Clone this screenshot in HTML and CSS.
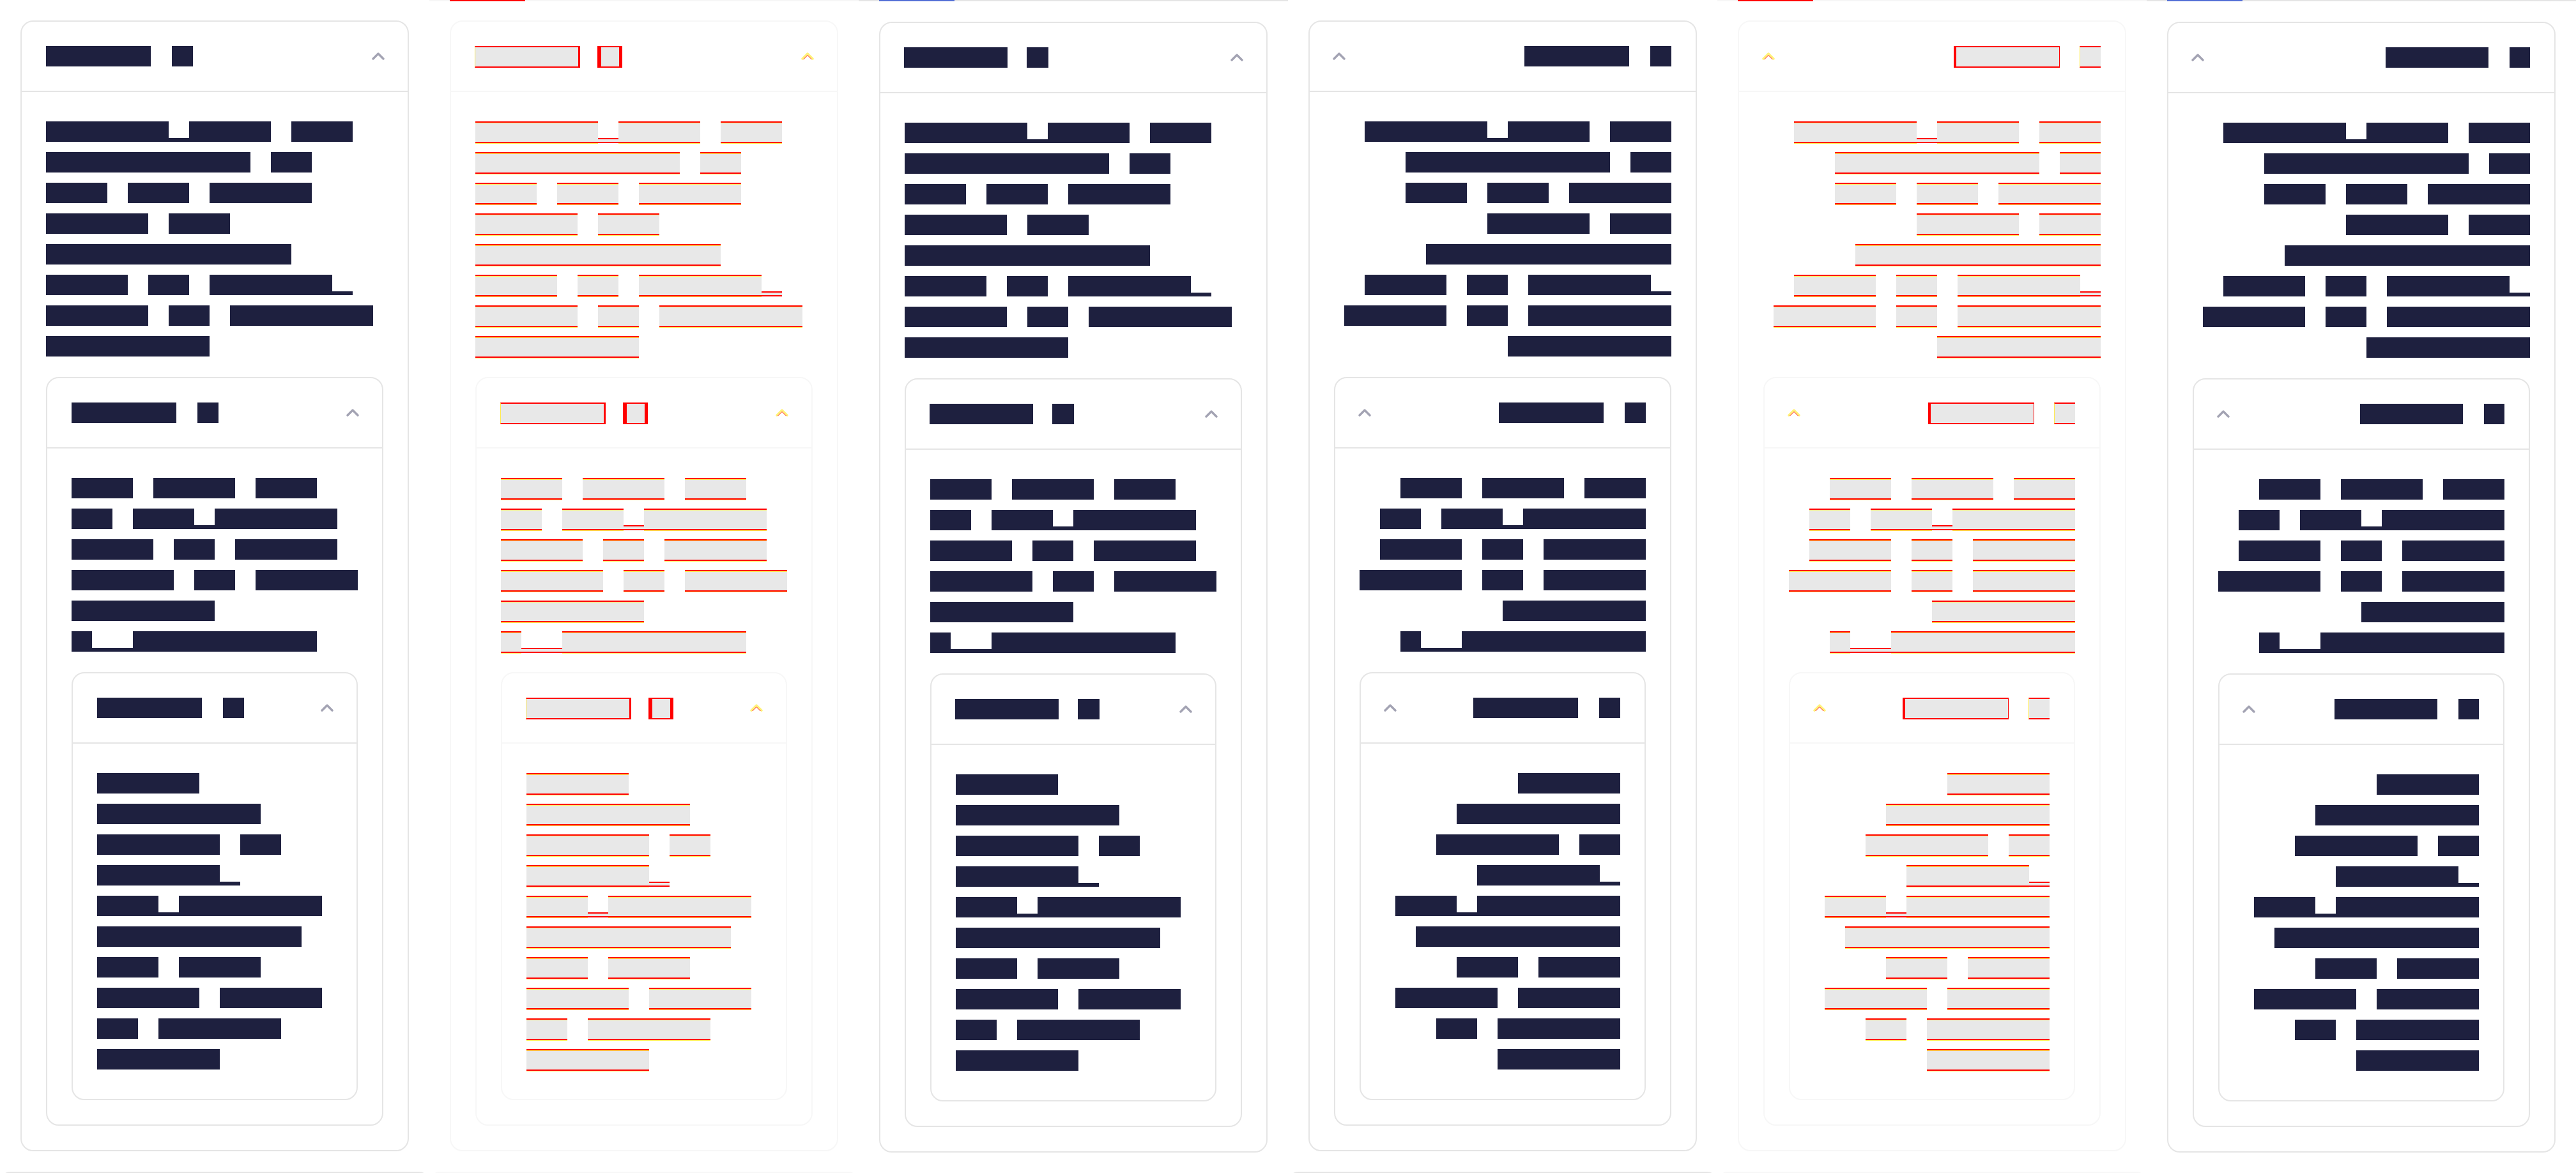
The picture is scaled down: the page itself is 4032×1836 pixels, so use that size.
FILE: index.html
```html
<!DOCTYPE html>
<html lang="en">
<head>
  <meta charset="UTF-8">
  <title>Accordion snapshot compare</title>
  <link rel="stylesheet" href="styles.css">
</head>
<body>

  <main class="board" id="board"></main>

  <script>
    // x = glyph, _ = low glyph, space = gap; one glyph is 32px wide
    const texts = [
      [
        "xxxxxx_xxxx xxx",
        "xxxxxxxxxx xx",
        "xxx xxx xxxxx",
        "xxxxx xxx",
        "xxxxxxxxxxxx",
        "xxxx xx xxxxxx_",
        "xxxxx xx xxxxxxx",
        "xxxxxxxx"
      ],
      [
        "xxx xxxx xxx",
        "xx xxx_xxxxxx",
        "xxxx xx xxxxx",
        "xxxxx xx xxxxx",
        "xxxxxxx",
        "x__xxxxxxxxx"
      ],
      [
        "xxxxx",
        "xxxxxxxx",
        "xxxxxx xx",
        "xxxxxx_",
        "xxx_xxxxxxx",
        "xxxxxxxxxx",
        "xxx xxxx",
        "xxxxx xxxxx",
        "xx xxxxxx",
        "xxxxxx"
      ]
    ];

    const columns = [
      { kind: "expected", dir: "ltr" },
      { kind: "diff", dir: "ltr" },
      { kind: "actual", dir: "ltr" },
      { kind: "expected", dir: "rtl" },
      { kind: "diff", dir: "rtl" },
      { kind: "actual", dir: "rtl" }
    ];

    const GLYPH = 32;

    function el(tag, cls) {
      const node = document.createElement(tag);
      if (cls) node.className = cls;
      return node;
    }

    function chevron(kind) {
      const wrap = el("span", "chevron");
      if (kind === "diff") {
        wrap.innerHTML =
          '<svg width="20" height="14" viewBox="0 0 20 14">' +
          '<path d="M2 11L10 3L18 11" fill="none" stroke="#fff27a" stroke-width="3.4" stroke-linecap="round" stroke-linejoin="round"/>' +
          '<path d="M3.5 12L10 5.5L16.5 12" fill="none" stroke="#ff2020" stroke-width="1"/>' +
          '</svg>';
      } else {
        wrap.innerHTML =
          '<svg width="20" height="14" viewBox="0 0 20 14">' +
          '<path d="M2 11L10 3L18 11" fill="none" stroke="#a3a3b3" stroke-width="3.4" stroke-linecap="round" stroke-linejoin="round"/>' +
          '</svg>';
      }
      return wrap;
    }

    function buildLine(text) {
      const line = el("div", "line");
      text.match(/x+|_+| +/g).forEach(run => {
        let cls = "gap";
        if (run[0] === "x") cls = "word";
        if (run[0] === "_") cls = "under";
        const span = el("span", cls);
        span.style.width = run.length * GLYPH + "px";
        line.appendChild(span);
      });
      return line;
    }

    function buildPanel(level, kind) {
      const panel = el("section", "panel");

      const head = el("div", "panel-head");
      const title = el("div", "panel-title");
      title.append(el("span", "title-word"), el("span", "title-count"));
      head.append(title, chevron(kind));

      const body = el("div", "panel-body");
      const para = el("div", "para");
      texts[level].forEach(t => para.appendChild(buildLine(t)));
      body.appendChild(para);
      if (level < texts.length - 1) body.appendChild(buildPanel(level + 1, kind));

      panel.append(head, body);
      return panel;
    }

    const board = document.getElementById("board");
    columns.forEach(c => {
      const col = el("div", "col col--" + c.kind + " col--" + c.dir);
      if (c.kind !== "expected") {
        const bar = el("div", "tabline");
        bar.appendChild(el("span", "tabline-mark"));
        col.appendChild(bar);
      }
      col.appendChild(buildPanel(0, c.kind));
      col.appendChild(el("div", "next-card"));
      board.appendChild(col);
    });
  </script>

</body>
</html>
```

FILE: styles.css
```css
html, body {
  margin: 0;
  background: #ffffff;
  font-family: "Liberation Sans", Arial, sans-serif;
}
.board {
  display: grid;
  grid-template-columns: repeat(6, 672px);
  height: 1836px;
  overflow: hidden;
}
.col {
  display: flex;
  flex-direction: column;
  padding: 32px 32px 0;
  overflow: hidden;
}
.col--diff,
.col--actual {
  padding-top: 0;
}
.tabline {
  display: flex;
  height: 2px;
  margin: 0 -32px 32px;
  padding-left: 32px;
  background: #e5e5e5;
  flex-shrink: 0;
}
.tabline-mark {
  width: 118px;
  background: #5470d6;
}
.col--diff .tabline {
  margin-bottom: 30px;
  background: #f6f6f6;
}
.col--diff .tabline-mark {
  background: #ff0000;
}

/* accordion panel */
.panel {
  border: 2px solid #e5e5e5;
  border-radius: 20px;
  background: #fff;
  flex-shrink: 0;
}
.panel-head {
  display: flex;
  align-items: center;
  justify-content: space-between;
  height: 108px;
  padding: 0 36px 0 38px;
  border-bottom: 2px solid #e5e5e5;
}
.panel-title {
  display: flex;
  align-items: flex-start;
  height: 32px;
}
.title-word,
.title-count {
  display: block;
  height: 32px;
  background: #1e203f;
}
.title-word {
  width: 164px;
}
.title-count {
  width: 33px;
  margin-left: 33px;
}
.chevron {
  display: flex;
  width: 20px;
  height: 14px;
}
.panel-body {
  display: flex;
  flex-direction: column;
  gap: 24px;
  padding: 38px;
}
.line {
  display: flex;
  align-items: flex-start;
  height: 48px;
  padding-top: 8px;
  box-sizing: border-box;
}
.line span {
  flex-shrink: 0;
}
.word {
  height: 32px;
  background: #1e203f;
}
.under {
  height: 6px;
  margin-top: 26px;
  background: #1e203f;
}
.next-card {
  flex-shrink: 0;
  height: 60px;
  margin: 32px -32px 0;
  border: 2px solid #e5e5e5;
  border-radius: 16px;
}

/* right-to-left columns */
.col--rtl .panel-head {
  flex-direction: row-reverse;
  padding: 0 38px 0 36px;
}
.col--rtl .line {
  justify-content: flex-end;
}

/* actual render, sub-pixel title */
.col--actual.col--ltr .title-word {
  width: 162px;
  margin-left: -1px;
}
.col--actual.col--ltr .title-count {
  width: 34px;
  margin-left: 30px;
}
.col--actual.col--rtl .title-word {
  width: 161px;
}
.col--actual.col--rtl .title-count {
  width: 32px;
  margin-left: 33px;
}

/* diff overlay column */
.col--diff .panel,
.col--diff .panel-head,
.col--diff .next-card {
  border-color: #f7f7f7;
}
.col--diff .word,
.col--diff .under,
.col--diff .title-word,
.col--diff .title-count {
  box-sizing: border-box;
  background: #e8e8e8;
  border-top: 2px solid #ff0000;
  border-bottom: 2px solid #ff0000;
}
.col--diff .word {
  height: 34px;
  box-shadow: inset 0 1px 0 #ffe94d, 0 1px 0 #ffe94d;
}
.col--diff .under {
  height: 8px;
}
.col--diff .title-word,
.col--diff .title-count {
  height: 34px;
  margin-bottom: -2px;
}
.col--diff.col--ltr .title-word {
  width: 165px;
  margin-left: -1px;
  border-left: 1px solid #ffe94d;
  border-right: 3px solid #ff0000;
}
.col--diff.col--ltr .title-count {
  width: 39px;
  margin-left: 27px;
  border-left: 6px solid #ff0000;
  border-right: 5px solid #ff0000;
}
.col--diff.col--rtl .title-word {
  width: 166px;
  border-left: 4px solid #ff0000;
  border-right: 1px solid #ff0000;
}
.col--diff.col--rtl .title-count {
  width: 33px;
  margin-left: 31px;
  border-left: 1px solid #ffe94d;
}
```
